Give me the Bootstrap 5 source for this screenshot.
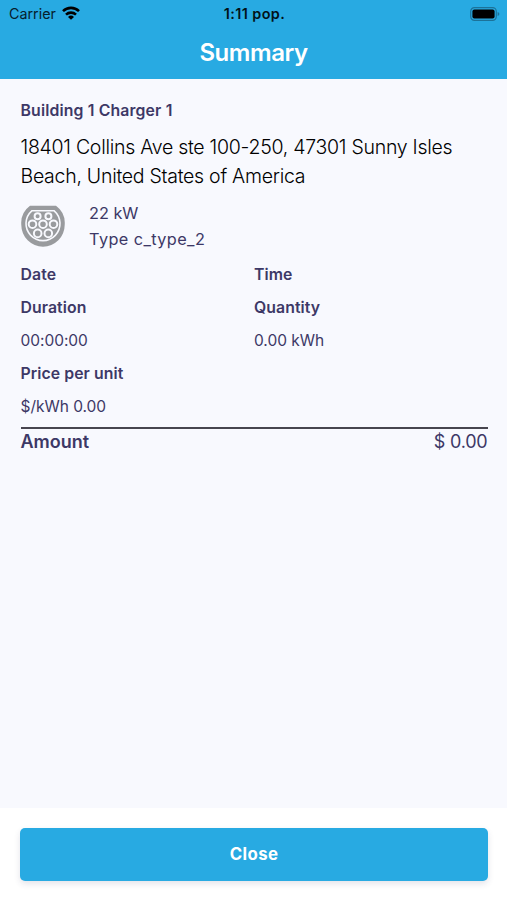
<!DOCTYPE html>
<html lang="en">
<head>
<meta charset="utf-8">
<meta name="viewport" content="width=device-width, initial-scale=1">
<title>Summary</title>
<link href="https://cdn.jsdelivr.net/npm/bootstrap@5.3.0/dist/css/bootstrap.min.css" rel="stylesheet">
<style>
  body { font-family: Inter, "Liberation Sans", sans-serif; background: #f8f9fe; color: #3d3866; font-size: 15.5px; }
  .app-header { background: #28aae2; height: 79px; }
  .status-bar { height: 27px; padding: 0 7px 0 9px; color: #06202c; font-size: 14.3px; line-height: 27px; }
  .status-bar > div { flex: 1 1 0; }
  .status-bar .wifi { margin-left: 6px; margin-bottom: 2px; }
  .clock { font-size: 14.4px; font-weight: 600; color: #021219; letter-spacing: .4px; }
  .screen-title { font-size: 24px; font-weight: 600; line-height: 52px; letter-spacing: -.45px; }
  .content { padding: 15px 19.5px 0 20.5px; }
  .station { font-size: 15.8px; line-height: 34px; font-weight: 600; letter-spacing: .15px; }
  .address { font-size: 19.5px; font-weight: 300; line-height: 29px; color: #000; letter-spacing: -.27px; margin-top: 5px; }
  .connector { height: 52px; margin: 9px 0 6px; font-size: 16.3px; line-height: 26px; }
  .connector svg { margin: 3px 24.5px 0 0; }
  .connector-type { letter-spacing: .4px; }
  .detail { line-height: 33px; letter-spacing: -.03px; }
  .detail .fw-semibold { font-size: 15.8px; letter-spacing: .08px; }
  .total { border-top: 2px solid #47454f; margin-top: 4px; font-size: 18px; line-height: 26px; }
  .total .price { letter-spacing: -.2px; }
  .footer-bar { height: 92px; padding: 20px 19px 19px 20px; }
  .btn-close-summary { --bs-btn-color: #fff; --bs-btn-bg: #28aae2; --bs-btn-hover-bg: #1d98ce; --bs-btn-hover-color: #fff; height: 53px; border: 0; border-radius: 5px; font-size: 16.8px; font-weight: 700; letter-spacing: .4px; box-shadow: 0 3px 6px rgba(50,50,93,.13); }
</style>
</head>
<body class="d-flex flex-column vh-100 overflow-hidden">
<header class="app-header flex-shrink-0">
  <div class="status-bar d-flex">
    <div class="d-flex align-items-center"><span>Carrier</span>
      <svg class="wifi" width="18" height="14" viewBox="0 0 18 14" fill="none" stroke="#000" stroke-width="2.6">
        <path d="M1 5.1a11.6 11.6 0 0 1 16 0M4 8.6a7.3 7.3 0 0 1 10 0"/><path d="M9 13.8 6 10.9a4.3 4.3 0 0 1 6 0z" fill="#000" stroke="none"/>
      </svg>
    </div>
    <div class="text-center"><span class="clock">1:11 pop.</span></div>
    <div class="d-flex align-items-center justify-content-end">
      <svg width="30" height="14" viewBox="0 0 30 14">
        <rect x=".7" y=".7" width="25.6" height="12.6" rx="3.7" fill="none" stroke="#1c7299" stroke-width="1.2"/>
        <rect x="2.4" y="2.4" width="22.2" height="9.2" rx="2" fill="#000"/><path d="M27.6 4.9q1.8.5 1.8 2.1t-1.8 2.1z" fill="#1c7299"/>
      </svg>
    </div>
  </div>
  <h1 class="screen-title text-white text-center m-0">Summary</h1>
</header>
<main class="content flex-grow-1">
  <h2 class="station m-0">Building 1 Charger 1</h2>
  <p class="address mb-0">18401 Collins Ave ste 100-250, 47301 Sunny Isles Beach, United States of America</p>
  <div class="connector d-flex">
    <svg width="44" height="44" viewBox="0 0 44 44">
      <path d="M9 2.8h26A21.6 21.6 0 0 1 43.7 22 21.7 21.7 0 0 1 .3 22 21.6 21.6 0 0 1 9 2.8z" fill="#999b9e"/>
      <path d="M10.8 7.8h22.4A17 17 0 1 1 10.8 7.8z" fill="#999b9e" stroke="#f8f9fe" stroke-width="1.6"/>
      <g fill="#999b9e" stroke="#f8f9fe" stroke-width="2"><circle cx="16.6" cy="13.2" r="3"/><circle cx="27.4" cy="13.2" r="3"/><circle cx="11.5" cy="21.2" r="3.8"/><circle cx="22" cy="21.2" r="3.8"/><circle cx="32.5" cy="21.2" r="3.8"/><circle cx="16.7" cy="30.4" r="3.8"/><circle cx="27.3" cy="30.4" r="3.8"/></g>
    </svg>
    <div><div>22 kW</div><div class="connector-type">Type c_type_2</div></div>
  </div>
  <div class="detail row g-0">
    <div class="col-6 fw-semibold">Date</div><div class="col-6 fw-semibold">Time</div>
    <div class="col-6 fw-semibold">Duration</div><div class="col-6 fw-semibold">Quantity</div>
    <div class="col-6">00:00:00</div><div class="col-6">0.00 kWh</div>
    <div class="col-12 fw-semibold">Price per unit</div>
    <div class="col-12">$/kWh 0.00</div>
  </div>
  <div class="total d-flex justify-content-between"><span class="fw-semibold">Amount</span><span class="price">$ 0.00</span></div>
</main>
<footer class="footer-bar bg-white flex-shrink-0">
  <button type="button" class="btn btn-close-summary w-100">Close</button>
</footer>
<script src="https://cdn.jsdelivr.net/npm/bootstrap@5.3.0/dist/js/bootstrap.bundle.min.js"></script>
</body>
</html>
